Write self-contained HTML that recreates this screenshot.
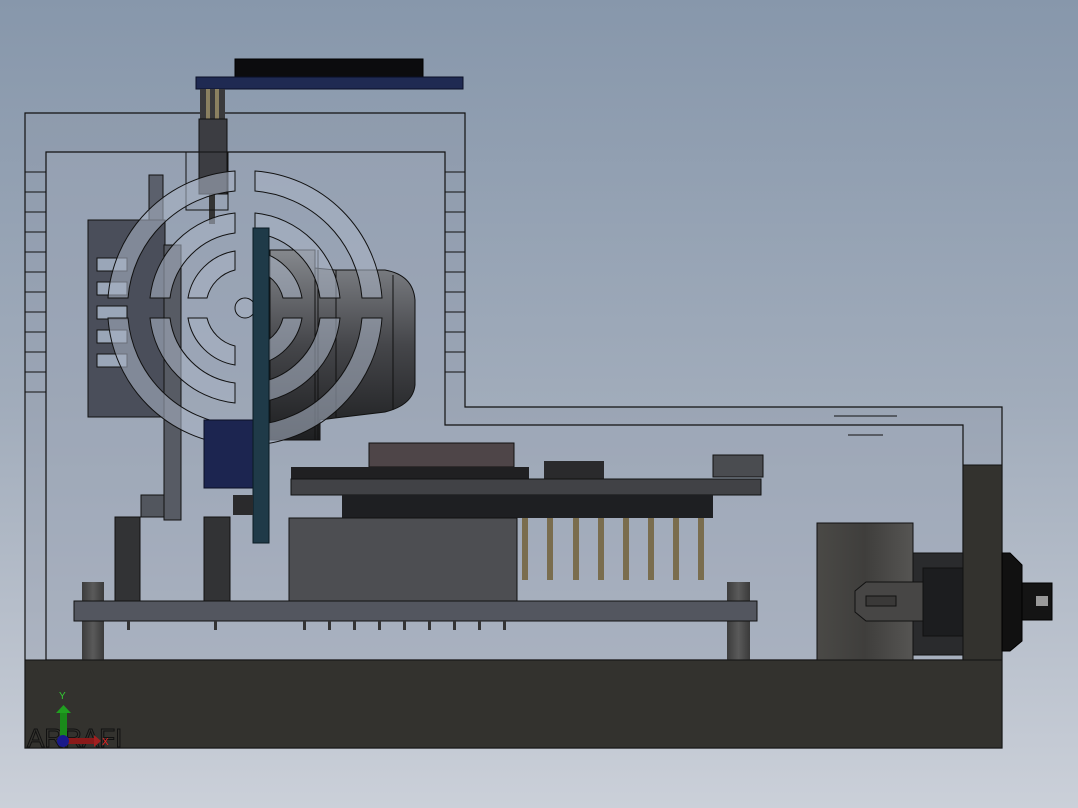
<!DOCTYPE html>
<html><head><meta charset="utf-8"><style>
html,body{margin:0;padding:0;width:1078px;height:808px;overflow:hidden}
svg{display:block}
</style></head><body>
<svg width="1078" height="808" viewBox="0 0 1078 808" xmlns="http://www.w3.org/2000/svg">
<defs>
<linearGradient id="bg" x1="0" y1="0" x2="0" y2="1">
<stop offset="0" stop-color="#8797ab"/><stop offset="0.5" stop-color="#a1acbb"/><stop offset="1" stop-color="#cbd0d9"/></linearGradient>
<linearGradient id="cyl" x1="0" y1="0" x2="1" y2="0">
<stop offset="0" stop-color="#4a4946"/><stop offset="0.5" stop-color="#3f3e3c"/><stop offset="1" stop-color="#565553"/></linearGradient>
<linearGradient id="mot" x1="0" y1="0" x2="0" y2="1">
<stop offset="0" stop-color="#85888d"/><stop offset="0.5" stop-color="#45464a"/><stop offset="1" stop-color="#1e1f21"/></linearGradient>
<linearGradient id="post" x1="0" y1="0" x2="1" y2="0">
<stop offset="0" stop-color="#3c3c3c"/><stop offset="0.5" stop-color="#5a5a5a"/><stop offset="1" stop-color="#3a3a3a"/></linearGradient>
</defs>
<rect width="1078" height="808" fill="url(#bg)"/>
<!-- enclosure -->
<path d="M25 113H465V407H1002V748H25Z" fill="#8e99aa" fill-opacity="0.35" stroke="#111" stroke-width="1.2"/>
<path d="M46 152H445V425H963V660H46Z" fill="#a3adbd" fill-opacity="0.3" stroke="#111" stroke-width="1.2"/>
<g stroke="#111" stroke-width="1" fill="none">
<path d="M25 172H46M25 192H46M25 212H46M25 232H46M25 252H46M25 272H46M25 292H46M25 312H46M25 332H46M25 352H46M25 372H46M25 392H46"/>
<path d="M445 172H465M445 192H465M445 212H465M445 232H465M445 252H465M445 272H465M445 292H465M445 312H465M445 332H465M445 352H465M445 372H465"/>
<path d="M834 416H897M848 435H883"/>
</g>
<!-- top PCB -->
<rect x="235" y="59" width="188" height="18" fill="#0c0c0e" stroke="#000"/>
<rect x="196" y="77" width="267" height="12" fill="#1f2a52" stroke="#0a0f25"/>
<rect x="200" y="89" width="25" height="30" fill="#3a3a3c"/>
<rect x="206" y="89" width="4" height="40" fill="#8a8060"/><rect x="215" y="89" width="4" height="40" fill="#8a8060"/>
<rect x="199" y="119" width="28" height="75" fill="#3c3d42" stroke="#111"/>
<rect x="209" y="194" width="6" height="30" fill="#333"/>
<path d="M186 152H228V210H186Z" fill="none" stroke="#111"/>
<!-- left block -->
<rect x="88" y="220" width="77" height="197" fill="#4a4e5a" stroke="#111"/>
<g fill="#9aa6b8" stroke="#111"><rect x="97" y="258" width="30" height="13"/><rect x="97" y="282" width="30" height="13"/><rect x="97" y="306" width="30" height="13"/><rect x="97" y="330" width="30" height="13"/><rect x="97" y="354" width="30" height="13"/></g>
<rect x="149" y="175" width="14" height="45" fill="#5b606c" stroke="#111"/>
<rect x="164" y="245" width="17" height="275" fill="#575b64" stroke="#111"/>
<!-- motor -->
<path d="M270 250H315V268L335 270H385Q413 275 415 300V385Q413 405 385 412L335 418L320 420V440H270Z" fill="url(#mot)" stroke="#111"/>
<path d="M315 250V440M318 250V440M336 270V418M393 275V410" stroke="#111" fill="none"/>
<!-- grille -->
<g fill="#a6b0c1" fill-opacity="0.6" stroke="#111" stroke-width="1">
<path d="M235 171A137 137 0 0 0 108 298H128A117 117 0 0 1 235 191Z"/>
<path d="M255 171A137 137 0 0 1 382 298H362A117 117 0 0 0 255 191Z"/>
<path d="M235 445A137 137 0 0 1 108 318H128A117 117 0 0 0 235 425Z"/>
<path d="M255 445A137 137 0 0 0 382 318H362A117 117 0 0 1 255 425Z"/>
<path d="M235 213A95 95 0 0 0 150 298H170A75 75 0 0 1 235 233Z"/>
<path d="M255 213A95 95 0 0 1 340 298H320A75 75 0 0 0 255 233Z"/>
<path d="M235 403A95 95 0 0 1 150 318H170A75 75 0 0 0 235 383Z"/>
<path d="M255 403A95 95 0 0 0 340 318H320A75 75 0 0 1 255 383Z"/>
<path d="M235 251A57 57 0 0 0 188 298H207A38 38 0 0 1 235 270Z"/>
<path d="M255 251A57 57 0 0 1 302 298H283A38 38 0 0 0 255 270Z"/>
<path d="M235 365A57 57 0 0 1 188 318H207A38 38 0 0 0 235 346Z"/>
<path d="M255 365A57 57 0 0 0 302 318H283A38 38 0 0 1 255 346Z"/>
<circle cx="245" cy="308" r="10"/>
</g>
<!-- teal bar and blue block -->
<rect x="204" y="420" width="50" height="68" fill="#1c2550" stroke="#0a0f25"/>
<rect x="253" y="228" width="16" height="315" fill="#1f3a48" stroke="#0a1a22"/>
<rect x="233" y="495" width="20" height="20" fill="#2a2a2c"/>
<rect x="141" y="495" width="23" height="22" fill="#52565e" stroke="#111"/>
<!-- middle PCB -->
<rect x="369" y="443" width="145" height="24" fill="#4e4548" stroke="#111"/>
<rect x="291" y="467" width="238" height="12" fill="#202022"/>
<rect x="544" y="461" width="60" height="18" fill="#2a2a2c"/>
<rect x="713" y="455" width="50" height="22" fill="#4a4c50" stroke="#111"/>
<rect x="291" y="479" width="470" height="16" fill="#414246" stroke="#111"/>
<rect x="342" y="495" width="371" height="23" fill="#1e1f22"/>
<g fill="#7a6d4e"><rect x="522" y="518" width="6" height="62"/><rect x="547" y="518" width="6" height="62"/><rect x="573" y="518" width="6" height="62"/><rect x="598" y="518" width="6" height="62"/><rect x="623" y="518" width="6" height="62"/><rect x="648" y="518" width="6" height="62"/><rect x="673" y="518" width="6" height="62"/><rect x="698" y="518" width="6" height="62"/></g>
<rect x="289" y="518" width="228" height="83" fill="#4d4e52" stroke="#111"/>
<!-- posts -->
<rect x="115" y="517" width="25" height="84" fill="#323335" stroke="#111"/>
<rect x="204" y="517" width="26" height="84" fill="#323335" stroke="#111"/>
<rect x="82" y="582" width="22" height="78" fill="url(#post)"/>
<rect x="727" y="582" width="23" height="78" fill="url(#post)"/>
<!-- bottom PCB -->
<rect x="74" y="601" width="683" height="20" fill="#53565f" stroke="#111"/>
<g fill="#333"><rect x="127" y="621" width="3" height="9"/><rect x="214" y="621" width="3" height="9"/><rect x="303" y="621" width="3" height="9"/><rect x="328" y="621" width="3" height="9"/><rect x="353" y="621" width="3" height="9"/><rect x="378" y="621" width="3" height="9"/><rect x="403" y="621" width="3" height="9"/><rect x="428" y="621" width="3" height="9"/><rect x="453" y="621" width="3" height="9"/><rect x="478" y="621" width="3" height="9"/><rect x="503" y="621" width="3" height="9"/></g>
<!-- right side -->
<rect x="817" y="523" width="96" height="137" fill="url(#cyl)" stroke="#111"/>
<rect x="913" y="553" width="50" height="102" fill="#2a2b2d" stroke="#111"/>
<rect x="923" y="568" width="40" height="68" fill="#1c1d1f" stroke="#111"/>
<path d="M866 582H923V621H866L855 612V591Z" fill="#474645" stroke="#111"/>
<rect x="866" y="596" width="30" height="10" fill="#3a3938" stroke="#111"/>
<rect x="963" y="465" width="39" height="195" fill="#33322e" stroke="#111"/>
<path d="M1002 553H1010L1022 565V641L1010 651H1002Z" fill="#111" stroke="#000"/>
<rect x="1022" y="583" width="30" height="37" fill="#141414" stroke="#000"/>
<rect x="1036" y="596" width="12" height="10" fill="#999"/>
<!-- base -->
<rect x="25" y="660" width="977" height="88" fill="#33322e" stroke="#111"/>
<!-- axes -->
<text x="27" y="747" font-family="Liberation Sans, sans-serif" font-size="26" fill="none" stroke="#111" stroke-width="1">ARRAFI</text>
<rect x="60" y="712" width="7" height="28" fill="#1a8a1a"/>
<path d="M56 713L63.5 705L71 713Z" fill="#20a020"/>
<rect x="66" y="738" width="28" height="6" fill="#8a1a1a"/>
<path d="M94 735L101 741L94 747Z" fill="#a02020"/>
<circle cx="63" cy="741" r="6" fill="#1a1a8a"/>
<text x="59" y="699" font-family="Liberation Sans, sans-serif" font-size="10" fill="#3c3">Y</text>
<text x="102" y="745" font-family="Liberation Sans, sans-serif" font-size="10" fill="#e22">X</text>
</svg>
</body></html>
